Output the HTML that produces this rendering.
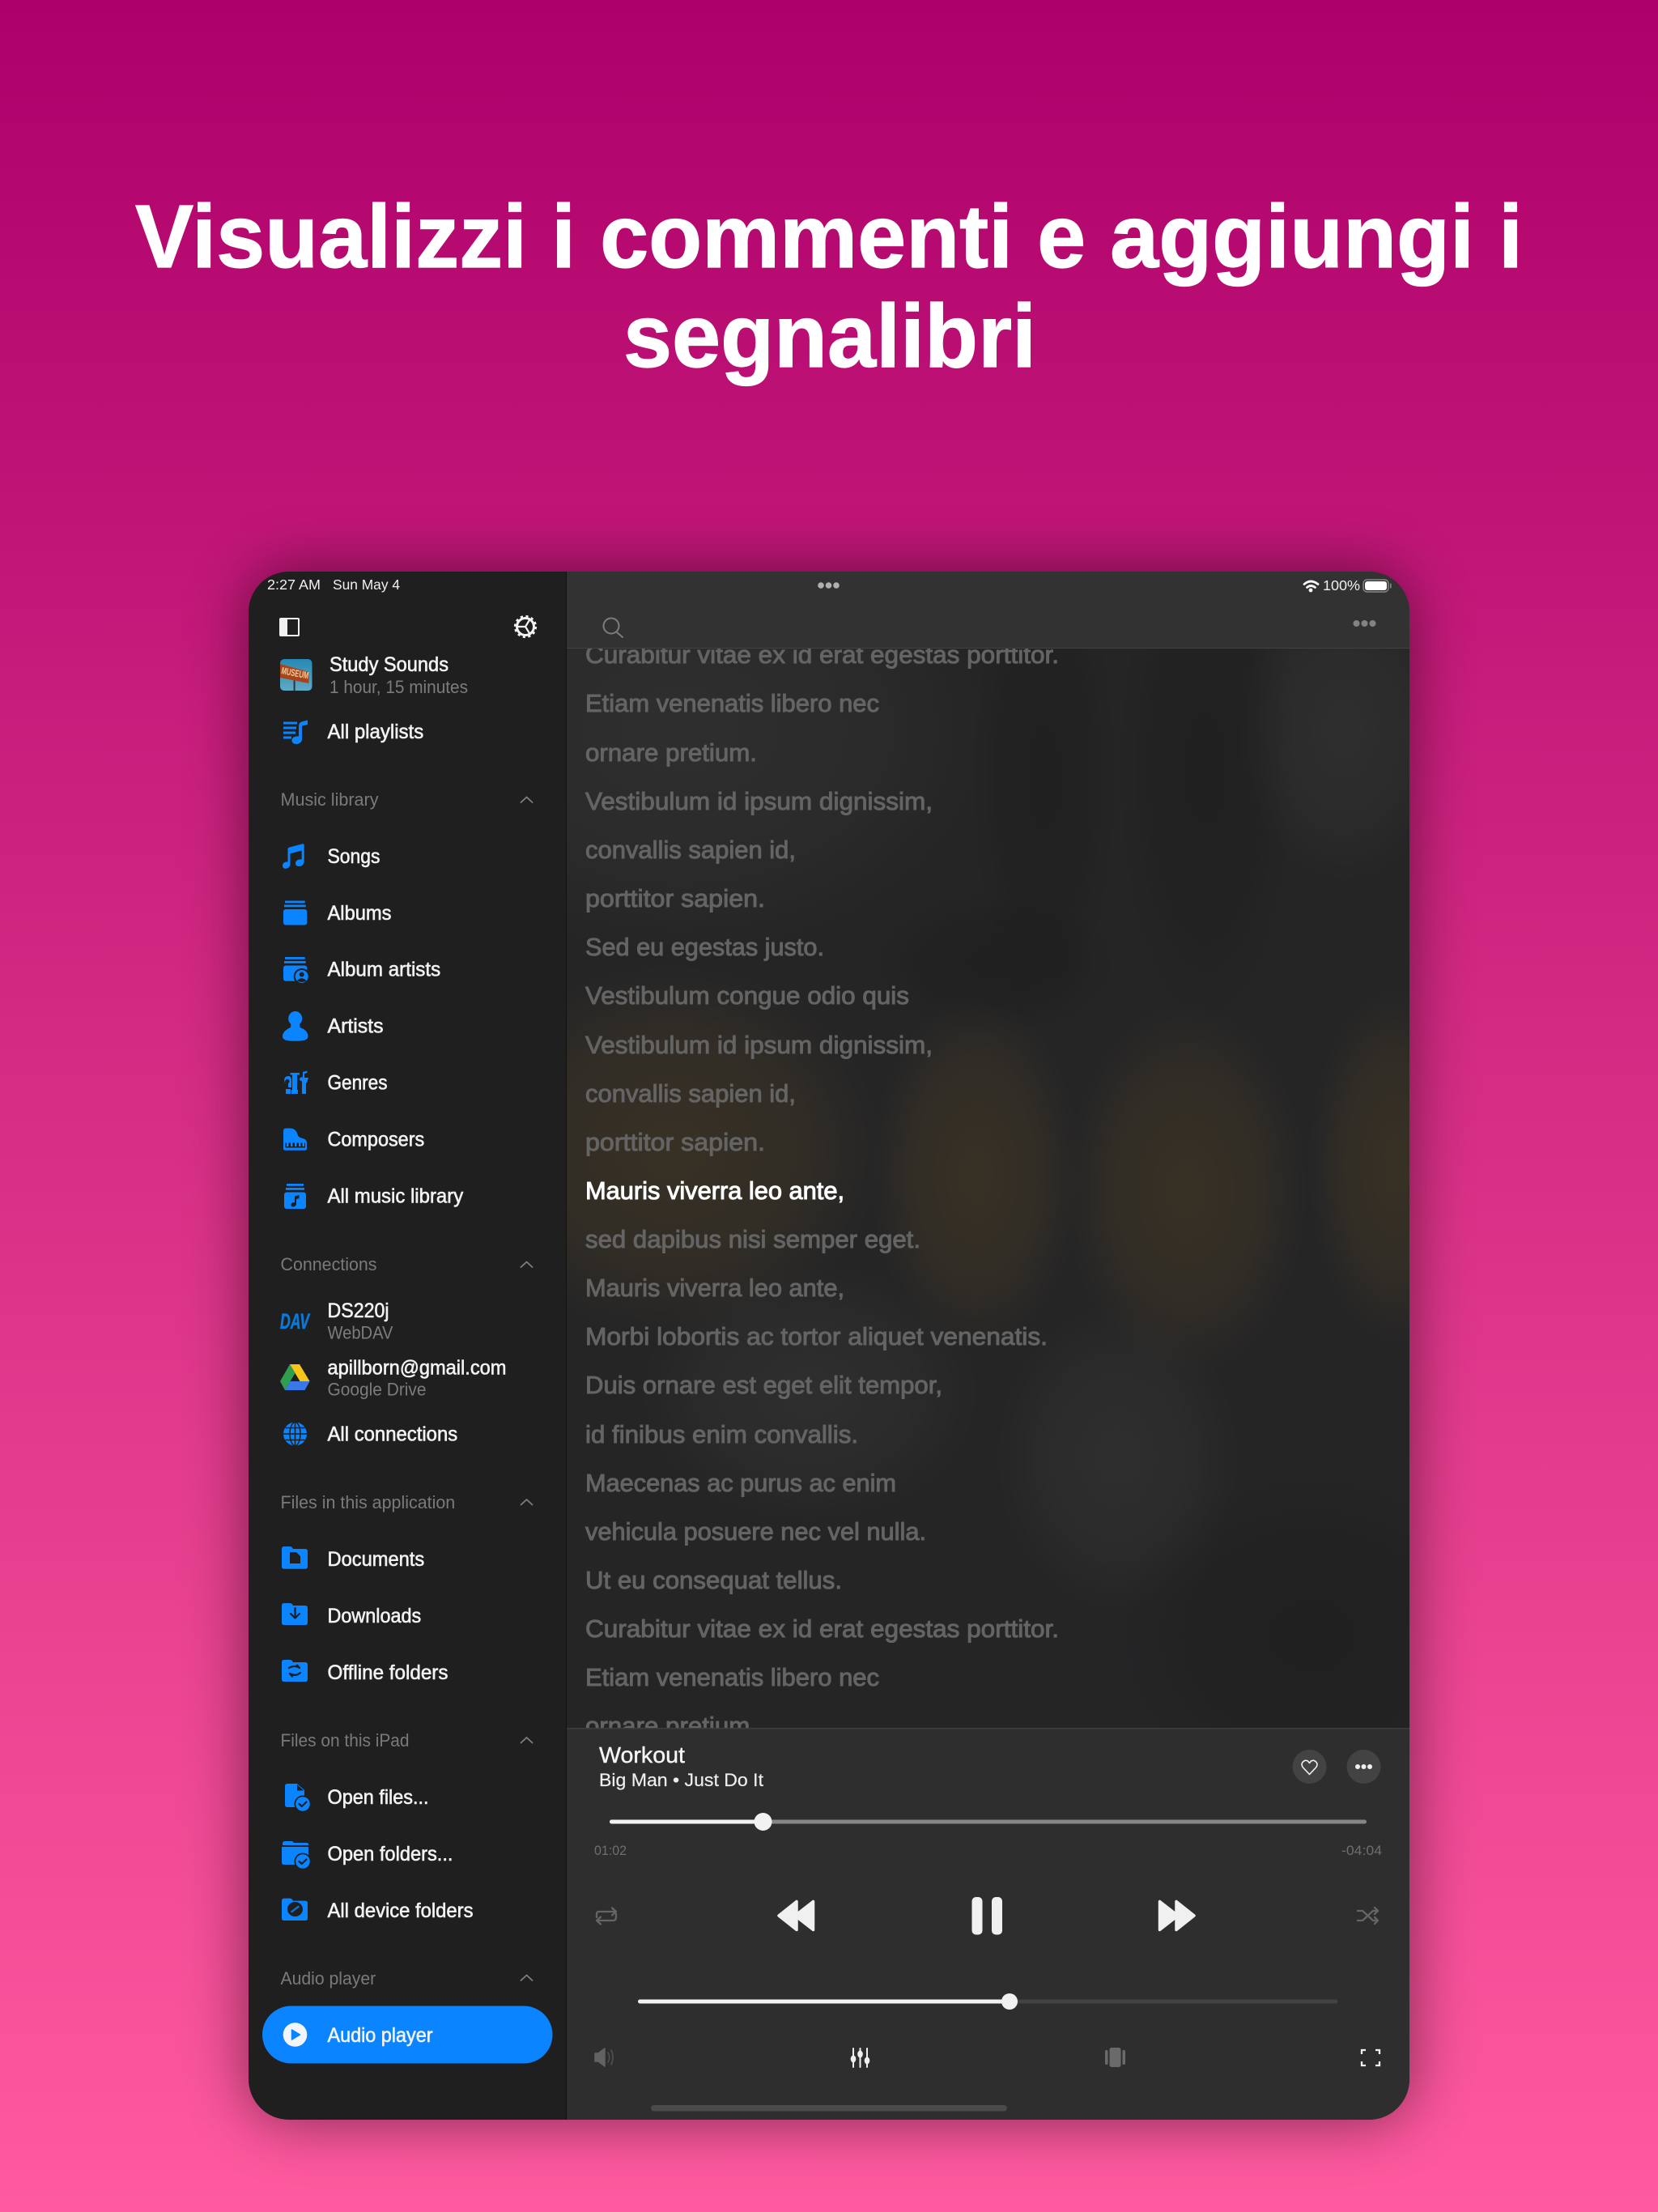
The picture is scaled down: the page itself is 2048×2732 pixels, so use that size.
<!DOCTYPE html>
<html><head><meta charset="utf-8"><title>Audio player</title>
<style>
html,body{margin:0;padding:0;background:#ad006b;}
svg{display:block;}
text{font-family:"Liberation Sans",sans-serif;}
.t{font-weight:700;font-size:110px;fill:#fff;stroke:#fff;stroke-width:1.2px;}
.l{font-size:31px;fill:#646464;stroke:#646464;stroke-width:1px;}
.n{font-size:25px;fill:#f2f2f2;stroke:#f2f2f2;stroke-width:.6px;}
.s{font-size:22px;fill:#7c7c7c;}
.h{font-size:22.5px;fill:#7a7a7a;}
.st{font-size:17.5px;fill:#f0f0f0;}
</style></head>
<body>
<svg xmlns="http://www.w3.org/2000/svg" width="2048" height="2732" viewBox="0 0 2048 2732">
<defs>
<linearGradient id="bg" x1="0" y1="0" x2="0" y2="1"><stop offset="0" stop-color="#ad006b"/><stop offset="1" stop-color="#ff5a9f"/></linearGradient>
<linearGradient id="art" x1="0" y1="0" x2="0" y2="1"><stop offset="0" stop-color="#2689b3"/><stop offset="1" stop-color="#5fa9c4"/></linearGradient>
<radialGradient id="ye"><stop offset="0" stop-color="#4a3c24" stop-opacity=".5"/><stop offset=".6" stop-color="#4a3c24" stop-opacity=".33"/><stop offset="1" stop-color="#4a3c24" stop-opacity="0"/></radialGradient>
<radialGradient id="da"><stop offset="0" stop-color="#1a1a1a" stop-opacity=".45"/><stop offset=".6" stop-color="#1a1a1a" stop-opacity=".28"/><stop offset="1" stop-color="#1a1a1a" stop-opacity="0"/></radialGradient>
<radialGradient id="li"><stop offset="0" stop-color="#3a3a3a" stop-opacity=".45"/><stop offset=".6" stop-color="#3a3a3a" stop-opacity=".28"/><stop offset="1" stop-color="#3a3a3a" stop-opacity="0"/></radialGradient>
<filter id="sh" x="-20%" y="-20%" width="140%" height="140%"><feGaussianBlur stdDeviation="38"/></filter>
<clipPath id="dev"><rect x="307" y="706" width="1434" height="1912" rx="50"/></clipPath>
<clipPath id="ly"><rect x="700" y="800" width="1041" height="1334"/></clipPath>
</defs>
<rect width="2048" height="2732" fill="url(#bg)"/>
<text class="t" x="167" y="330" textLength="1714" lengthAdjust="spacingAndGlyphs">Visualizzi i commenti e aggiungi i</text>
<text class="t" x="770" y="453" textLength="510" lengthAdjust="spacingAndGlyphs">segnalibri</text>
<rect x="307" y="706" width="1434" height="1912" rx="50" fill="#000" opacity=".5" filter="url(#sh)"/>

<g clip-path="url(#dev)">
<rect x="307" y="706" width="393" height="1912" fill="#1f1f1f"/>
<rect x="699" y="706" width="1" height="1912" fill="#111"/>
<rect x="700" y="706" width="1041" height="1912" fill="#252526"/>
<g clip-path="url(#ly)">
<ellipse cx="840" cy="900" rx="380" ry="280" fill="url(#li)"/>
<ellipse cx="1290" cy="960" rx="90" ry="300" fill="url(#da)"/>
<ellipse cx="1490" cy="950" rx="110" ry="320" fill="url(#da)"/>
<ellipse cx="1230" cy="1190" rx="150" ry="90" fill="url(#da)"/>
<ellipse cx="1660" cy="900" rx="130" ry="190" fill="url(#li)"/>
<ellipse cx="830" cy="1420" rx="260" ry="230" fill="url(#ye)"/>
<ellipse cx="1205" cy="1450" rx="130" ry="220" fill="url(#ye)"/>
<ellipse cx="1465" cy="1470" rx="150" ry="230" fill="url(#ye)"/>
<ellipse cx="1725" cy="1440" rx="110" ry="220" fill="url(#ye)"/>
<ellipse cx="1380" cy="1800" rx="150" ry="190" fill="url(#li)"/>
<ellipse cx="1000" cy="1720" rx="210" ry="160" fill="url(#li)"/>
<ellipse cx="1620" cy="2020" rx="240" ry="200" fill="url(#da)"/>
<text class="l" x="723" y="819" textLength="585" lengthAdjust="spacingAndGlyphs">Curabitur vitae ex id erat egestas porttitor.</text>
<text class="l" x="723" y="879" textLength="363" lengthAdjust="spacingAndGlyphs">Etiam venenatis libero nec</text>
<text class="l" x="723" y="940" textLength="212" lengthAdjust="spacingAndGlyphs">ornare pretium.</text>
<text class="l" x="723" y="1000" textLength="429" lengthAdjust="spacingAndGlyphs">Vestibulum id ipsum dignissim,</text>
<text class="l" x="723" y="1060" textLength="260" lengthAdjust="spacingAndGlyphs">convallis sapien id,</text>
<text class="l" x="723" y="1120" textLength="222" lengthAdjust="spacingAndGlyphs">porttitor sapien.</text>
<text class="l" x="723" y="1180" textLength="295" lengthAdjust="spacingAndGlyphs">Sed eu egestas justo.</text>
<text class="l" x="723" y="1240" textLength="400" lengthAdjust="spacingAndGlyphs">Vestibulum congue odio quis</text>
<text class="l" x="723" y="1301" textLength="429" lengthAdjust="spacingAndGlyphs">Vestibulum id ipsum dignissim,</text>
<text class="l" x="723" y="1361" textLength="260" lengthAdjust="spacingAndGlyphs">convallis sapien id,</text>
<text class="l" x="723" y="1421" textLength="222" lengthAdjust="spacingAndGlyphs">porttitor sapien.</text>
<text class="l" x="723" y="1481" textLength="320" lengthAdjust="spacingAndGlyphs" style="fill:#fff;stroke:#fff">Mauris viverra leo ante,</text>
<text class="l" x="723" y="1541" textLength="414" lengthAdjust="spacingAndGlyphs">sed dapibus nisi semper eget.</text>
<text class="l" x="723" y="1601" textLength="320" lengthAdjust="spacingAndGlyphs">Mauris viverra leo ante,</text>
<text class="l" x="723" y="1661" textLength="571" lengthAdjust="spacingAndGlyphs">Morbi lobortis ac tortor aliquet venenatis.</text>
<text class="l" x="723" y="1721" textLength="441" lengthAdjust="spacingAndGlyphs">Duis ornare est eget elit tempor,</text>
<text class="l" x="723" y="1782" textLength="337" lengthAdjust="spacingAndGlyphs">id finibus enim convallis.</text>
<text class="l" x="723" y="1842" textLength="384" lengthAdjust="spacingAndGlyphs">Maecenas ac purus ac enim</text>
<text class="l" x="723" y="1902" textLength="421" lengthAdjust="spacingAndGlyphs">vehicula posuere nec vel nulla.</text>
<text class="l" x="723" y="1962" textLength="317" lengthAdjust="spacingAndGlyphs">Ut eu consequat tellus.</text>
<text class="l" x="723" y="2022" textLength="585" lengthAdjust="spacingAndGlyphs">Curabitur vitae ex id erat egestas porttitor.</text>
<text class="l" x="723" y="2082" textLength="363" lengthAdjust="spacingAndGlyphs">Etiam venenatis libero nec</text>
<text class="l" x="723" y="2142" textLength="212" lengthAdjust="spacingAndGlyphs">ornare pretium.</text>
</g>
<!-- header -->
<rect x="700" y="706" width="1041" height="94" fill="#323232"/>
<rect x="700" y="800" width="1041" height="1" fill="#424242"/>
<!-- player -->
<rect x="700" y="2134" width="1041" height="484" fill="#2e2e2e"/>
<rect x="700" y="2134" width="1041" height="1.5" fill="#3e3e3e"/>
</g>

<!-- status bar -->
<text class="st" x="330" y="728" textLength="66" lengthAdjust="spacingAndGlyphs">2:27 AM</text>
<text class="st" x="411" y="728" textLength="83" lengthAdjust="spacingAndGlyphs">Sun May 4</text>
<g fill="#b0b0b0"><circle cx="1014" cy="723" r="3.800"/><circle cx="1023.500" cy="723" r="3.800"/><circle cx="1033" cy="723" r="3.800"/></g>
<g fill="none" stroke="#f5f5f5" stroke-width="2.800" stroke-linecap="round"><path d="M1611 721.500Q1619 714.500 1628 721.500"/><path d="M1614.500 725.500Q1619 721.500 1624.500 725.500"/></g>
<circle cx="1619" cy="729" r="2.400" fill="#f5f5f5"/>
<text class="st" x="1634" y="729" textLength="46" lengthAdjust="spacingAndGlyphs">100%</text>
<rect x="1684" y="716" width="31" height="15" rx="4.500" fill="none" stroke="#8a8a8a" stroke-width="1.400"/>
<rect x="1686" y="718" width="27" height="11" rx="3" fill="#fff"/>
<rect x="1717" y="720.500" width="1.600" height="6" rx=".8" fill="#8a8a8a"/>

<!-- header icons -->
<rect x="345" y="763" width="25" height="23" rx="2" fill="#f0f0f0"/>
<rect x="355" y="765" width="13" height="19" fill="#1f1f1f"/>
<g fill="none" stroke="#f2f2f2">
<circle cx="649" cy="774" r="10.500" stroke-width="3"/>
<circle cx="649" cy="774" r="12.600" stroke-width="3" stroke-dasharray="3.100 3.500"/>
<path d="M639 774H649L654.500 765M649 774L654.500 783" stroke-width="2.200"/>
</g>
<g fill="none" stroke="#7d7d7d" stroke-width="2"><circle cx="755" cy="773" r="9.500"/><path d="M761.500 780.500L769 787" stroke-linecap="round"/></g>
<g fill="#828282"><circle cx="1675.500" cy="770" r="4"/><circle cx="1685.500" cy="770" r="4"/><circle cx="1695.500" cy="770" r="4"/></g>

<!-- playlist header -->
<rect x="346" y="814" width="39.500" height="39" rx="5" fill="url(#art)"/>
<rect x="362.600" y="836" width="2" height="17" fill="#3a3030"/>
<polygon points="346,820 381.500,830 381.500,844 346,837" fill="#a8441c"/>
<text x="347" y="832" transform="rotate(11 347 832)" textLength="34" lengthAdjust="spacingAndGlyphs" style="font-size:12px;font-weight:700;fill:#f4cf9c">MUSEUM</text>
<text class="n" x="407" y="829" textLength="147" lengthAdjust="spacingAndGlyphs">Study Sounds</text>
<text class="s" x="407" y="856" textLength="171" lengthAdjust="spacingAndGlyphs">1 hour, 15 minutes</text>

<!-- sidebar icons -->
<g fill="#0a84ff">
<path d="M350 891.500H367V894.500H350ZM350 897.500H366V900.500H350ZM350 903.500H365V906.500H350ZM350 909.500H360V912.500H350Z"/>
<path d="M369 897Q369 892 374 891L380 889.500V895L373 896.500V913C373 916.500 369.500 919 366 919C362.500 919 360.500 917 360.500 914.500C360.500 911 364 909 369 909.500Z"/>
<path d="M355.500 1049Q355.500 1047 357.500 1046.500L373.500 1042.300Q375.700 1041.800 375.700 1044V1064C375.700 1067.500 372.800 1070 369.500 1070C366.800 1070 365 1068.500 365 1066.200C365 1063 368.500 1060.800 372.700 1061.500V1050.500L358.500 1054.200V1067.500C358.500 1070.500 355.800 1072.800 352.800 1072.800C350.500 1072.800 349 1071.300 349 1069.200C349 1066 352 1063.900 355.500 1064.500Z"/>
<rect x="352" y="1112.500" width="24.700" height="2.800"/><rect x="351" y="1117.500" width="26.700" height="2.800"/><rect x="350" y="1123" width="29.300" height="19.500" rx="3"/>
<rect x="352" y="1182" width="24.700" height="2.800"/><rect x="351" y="1187" width="26.700" height="2.800"/><rect x="350" y="1192.500" width="29.300" height="19.300" rx="3"/>
<circle cx="372.700" cy="1206" r="10" fill="#1f1f1f"/><circle cx="372.700" cy="1206" r="8" />
<circle cx="372.700" cy="1203.500" r="3" fill="#1f1f1f"/><path d="M366.700 1211.500Q372.700 1205 378.700 1211.500Q372.700 1214.500 366.700 1211.500Z" fill="#1f1f1f"/>
<ellipse cx="364.700" cy="1258" rx="8.500" ry="9"/><path d="M359.500 1263H370L370.500 1269Q380.500 1272.500 380.500 1280C380.500 1284.500 375 1285.800 364.700 1285.800C354.500 1285.800 349 1284.500 349 1280C349 1272.500 359 1269 359 1269Z"/>
<!-- genres -->
<path d="M356 1329C350 1329 350 1337 354 1339L352 1337C352 1334 354 1332 356 1333C358 1334 358 1337 356 1338V1343H360V1335C360 1331 359 1329 356 1329Z"/>
<path d="M353 1345H359V1351H353Z"/>
<path d="M358.500 1325H370V1327.500H367V1346H368V1351H360V1346H361V1327.500H358.500Z"/>
<path d="M372 1331H381L379 1337H378V1351H373V1337Z"/>
<path d="M379.500 1322.500V1325L376 1326V1332C376 1334 374 1335 372.500 1335C371 1335 370 1334 370 1333C370 1331 372 1330 374 1330.500V1324Z"/>
<!-- piano -->
<path d="M350 1397Q350 1393.500 353.500 1393.500H358Q365.500 1393.500 367.500 1401Q368.500 1405 374 1406Q379 1407 379 1412V1418.500Q379 1420.700 376.800 1420.700H352.200Q350 1420.700 350 1418.500Z"/>
<path d="M352.500 1411.500H377V1417.500H352.500Z" fill="#1f1f1f"/><path d="M354 1411.500H356.500V1416H354ZM359 1411.500H361.500V1416H359ZM364 1411.500H366.500V1416H364ZM369 1411.500H371.500V1416H369ZM373.500 1411.500H376V1416H373.500Z"/>
<!-- all music -->
<rect x="354" y="1462" width="21" height="2.800"/><rect x="353" y="1467" width="23" height="2.800"/><rect x="351" y="1472.500" width="27" height="20.500" rx="3"/>
<path d="M364 1477.500L369.500 1476V1480L366 1481V1487C366 1489 364 1490.500 362 1490.500C360.500 1490.500 359.500 1489.500 359.500 1488.200C359.500 1486.200 361.500 1484.700 364 1485Z" fill="#1f1f1f"/>
<!-- globe -->
<circle cx="364.500" cy="1771" r="14.500"/>
<g fill="none" stroke="#1f1f1f" stroke-width="1.500"><ellipse cx="364.500" cy="1771" rx="6.500" ry="14.500"/><path d="M364.500 1756.500V1785.500M350 1771H379M352.500 1763.500H376.500M352.500 1778.500H376.500"/></g>
<!-- folders -->
<path d="M348 1913Q348 1910 351 1910H358Q360 1910 361 1911.500L362 1913H377Q380 1913 380 1916V1935Q380 1937.700 377 1937.700H351Q348 1937.700 348 1935Z"/>
<path d="M348 1983Q348 1980 351 1980H358Q360 1980 361 1981.500L362 1983H377Q380 1983 380 1986V2004Q380 2007 377 2007H351Q348 2007 348 2004Z"/>
<path d="M348 2053Q348 2050 351 2050H358Q360 2050 361 2051.500L362 2053H377Q380 2053 380 2056V2074Q380 2077 377 2077H351Q348 2077 348 2074Z"/>
<path d="M348 2347.600Q348 2344.600 351 2344.600H358Q360 2344.600 361 2346.100L362 2347.600H377Q380 2347.600 380 2350.600V2369Q380 2372 377 2372H351Q348 2372 348 2369Z"/>
</g>
<path d="M358 1917H366L371 1922V1931H358Z" fill="#1f1f1f"/>
<g fill="none" stroke="#1f1f1f" stroke-width="2.200" stroke-linecap="round" stroke-linejoin="round">
<path d="M364.500 1986V1998M359 1993L364.500 1998.500L370 1993"/>
<path d="M357 2060Q364 2056 370 2060M370 2060L367 2056.500M371 2066Q365 2071 358 2067M358 2067L361 2070.500"/>
</g>
<ellipse cx="364.500" cy="2358" rx="9.500" ry="9" fill="#1f1f1f"/>
<path d="M360.500 2361L368.500 2355" stroke="#0a84ff" stroke-width="2.500" stroke-linecap="round" fill="none" opacity=".8"/>
<!-- drive -->
<polygon points="358,1685 370,1685 382.500,1706 370.500,1706" fill="#f5c518"/>
<polygon points="358,1685 364.500,1696 352,1717 346,1706" fill="#2f9e4f"/>
<polygon points="352,1717 358.500,1706 382.500,1706 376.500,1717" fill="#3b78e7"/>
<text x="346" y="1641" textLength="36" lengthAdjust="spacingAndGlyphs" style="font-size:27px;font-weight:700;font-style:italic;fill:#0b79d8;stroke:#0b79d8;stroke-width:.6px">DAV</text>
<!-- open files -->
<g fill="#0a84ff">
<path d="M352 2206Q352 2203 355 2203H367L376 2211V2232H355Q352 2232 352 2229Z"/>
<path d="M349 2277Q349 2274 352 2274H360Q362 2274 363 2276H379Q381 2276 381.500 2279H349Z"/>
<path d="M348 2281H381V2300Q381 2303 378 2303H351Q348 2303 348 2300Z"/>
</g>
<path d="M367 2204V2211.500H375Z" fill="#1f1f1f"/>
<circle cx="374" cy="2228" r="10.500" fill="#1f1f1f"/><circle cx="374" cy="2228" r="8.800" fill="#0a84ff"/>
<path d="M369.500 2228L372.800 2231L378.500 2225.500" fill="none" stroke="#1f1f1f" stroke-width="2.200" stroke-linecap="round" stroke-linejoin="round"/>
<circle cx="374" cy="2299" r="10.500" fill="#1f1f1f"/><circle cx="374" cy="2299" r="8.800" fill="#0a84ff"/>
<path d="M369.500 2299L372.800 2302L378.500 2296.500" fill="none" stroke="#1f1f1f" stroke-width="2.200" stroke-linecap="round" stroke-linejoin="round"/>
<!-- play pill -->
<rect x="324" y="2477.500" width="358.500" height="71" rx="35.500" fill="#0a84ff"/>
<circle cx="364.500" cy="2513" r="14.800" fill="#f2f6fb"/>
<path d="M360.500 2507V2519L370.500 2513Z" fill="#0a84ff" stroke="#0a84ff" stroke-width="1.500" stroke-linejoin="round"/>

<!-- sidebar labels -->
<text class="n" x="404.500" y="912" textLength="118.700" lengthAdjust="spacingAndGlyphs">All playlists</text>
<text class="h" x="346.500" y="995" textLength="121" lengthAdjust="spacingAndGlyphs">Music library</text>
<text class="n" x="404.500" y="1066" textLength="65" lengthAdjust="spacingAndGlyphs">Songs</text>
<text class="n" x="404.500" y="1136" textLength="79" lengthAdjust="spacingAndGlyphs">Albums</text>
<text class="n" x="404.500" y="1205.500" textLength="139.700" lengthAdjust="spacingAndGlyphs">Album artists</text>
<text class="n" x="404.500" y="1275.500" textLength="69" lengthAdjust="spacingAndGlyphs">Artists</text>
<text class="n" x="404.500" y="1345.500" textLength="74" lengthAdjust="spacingAndGlyphs">Genres</text>
<text class="n" x="404.500" y="1415.500" textLength="119.700" lengthAdjust="spacingAndGlyphs">Composers</text>
<text class="n" x="404.500" y="1485.500" textLength="167.700" lengthAdjust="spacingAndGlyphs">All music library</text>
<text class="h" x="346.500" y="1569" textLength="119" lengthAdjust="spacingAndGlyphs">Connections</text>
<text class="n" x="404.500" y="1627" textLength="76" lengthAdjust="spacingAndGlyphs">DS220j</text>
<text class="s" x="404.500" y="1653.500" textLength="81" lengthAdjust="spacingAndGlyphs">WebDAV</text>
<text class="n" x="404.500" y="1697.500" textLength="221" lengthAdjust="spacingAndGlyphs">apillborn@gmail.com</text>
<text class="s" x="404.500" y="1723.500" textLength="122" lengthAdjust="spacingAndGlyphs">Google Drive</text>
<text class="n" x="404.500" y="1779.500" textLength="160.700" lengthAdjust="spacingAndGlyphs">All connections</text>
<text class="h" x="346.500" y="1863" textLength="215.700" lengthAdjust="spacingAndGlyphs">Files in this application</text>
<text class="n" x="404.500" y="1934" textLength="119.700" lengthAdjust="spacingAndGlyphs">Documents</text>
<text class="n" x="404.500" y="2004" textLength="115.700" lengthAdjust="spacingAndGlyphs">Downloads</text>
<text class="n" x="404.500" y="2074" textLength="149" lengthAdjust="spacingAndGlyphs">Offline folders</text>
<text class="h" x="346.500" y="2157" textLength="159" lengthAdjust="spacingAndGlyphs">Files on this iPad</text>
<text class="n" x="404.500" y="2228" textLength="125" lengthAdjust="spacingAndGlyphs">Open files...</text>
<text class="n" x="404.500" y="2298" textLength="155" lengthAdjust="spacingAndGlyphs">Open folders...</text>
<text class="n" x="404.500" y="2368" textLength="180" lengthAdjust="spacingAndGlyphs">All device folders</text>
<text class="h" x="346.500" y="2451" textLength="117.700" lengthAdjust="spacingAndGlyphs">Audio player</text>
<text class="n" x="404.500" y="2522" textLength="130" lengthAdjust="spacingAndGlyphs">Audio player</text>
<g fill="none" stroke="#7f7f7f" stroke-width="1.800" stroke-linecap="round" stroke-linejoin="round">
<path d="M643.500 991L650.500 984.500L657.500 991"/><path d="M643.500 1565L650.500 1558.500L657.500 1565"/><path d="M643.500 1858.500L650.500 1852L657.500 1858.500"/><path d="M643.500 2152.500L650.500 2146L657.500 2152.500"/><path d="M643.500 2446L650.500 2439.500L657.500 2446"/>
</g>

<!-- player -->
<text x="740" y="2177" textLength="106" lengthAdjust="spacingAndGlyphs" style="font-size:28px;fill:#f5f5f5;stroke:#f5f5f5;stroke-width:.4px">Workout</text>
<text x="740" y="2206" textLength="203" lengthAdjust="spacingAndGlyphs" style="font-size:22.500px;fill:#eee;stroke:#eee;stroke-width:.2px">Big Man • Just Do It</text>
<circle cx="1617.500" cy="2182" r="21" fill="#434343"/><circle cx="1684.500" cy="2182" r="21" fill="#434343"/>
<path d="M1617.500 2191.500L1609.500 2183Q1606.800 2179.500 1609 2176.500Q1612 2173 1615.500 2175L1617.500 2177.500L1619.500 2175Q1623 2173 1626 2176.500Q1628.200 2179.500 1625.500 2183Z" fill="none" stroke="#f0f0f0" stroke-width="1.600" stroke-linejoin="round"/>
<g fill="#f0f0f0"><circle cx="1677" cy="2182" r="3"/><circle cx="1684.500" cy="2182" r="3"/><circle cx="1692" cy="2182" r="3"/></g>
<rect x="753" y="2247.500" width="935" height="5" rx="2.500" fill="#868686"/>
<rect x="753" y="2247.500" width="190" height="5" rx="2.500" fill="#f2f2f2"/>
<circle cx="942.500" cy="2250" r="11" fill="#f2f2f2"/>
<text x="734" y="2291" textLength="40" lengthAdjust="spacingAndGlyphs" style="font-size:17px;fill:#6e6e6e">01:02</text>
<text x="1657" y="2291" textLength="50" lengthAdjust="spacingAndGlyphs" style="font-size:17px;fill:#6e6e6e">-04:04</text>
<!-- transport -->
<g fill="#f0f0f0" stroke="#f0f0f0" stroke-width="3.500" stroke-linejoin="round">
<path d="M962 2366L984 2348.500V2383.500Z"/><path d="M982 2366L1004.500 2348.500V2383.500Z"/>
<path d="M1475 2366L1453 2348.500V2383.500Z"/><path d="M1455 2366L1432.500 2348.500V2383.500Z"/>
</g>
<rect x="1200.500" y="2343" width="13" height="46.500" rx="5" fill="#f0f0f0"/><rect x="1225" y="2343" width="13" height="46.500" rx="5" fill="#f0f0f0"/>
<g fill="none" stroke="#656565" stroke-width="2.300" stroke-linecap="round" stroke-linejoin="round">
<path d="M737 2368V2364Q737 2361 740 2361H761M756 2356.500L761 2361L756 2365.500"/>
<path d="M761 2364V2368Q761 2372 757 2372H737M742 2367.500L737 2372L742 2376.500"/>
<path d="M1677 2360H1683L1696 2372H1702M1698 2356L1702 2360L1698 2364M1677 2372H1683L1696 2360H1702M1698 2368L1702 2372L1698 2376"/>
</g>
<rect x="788" y="2469.500" width="864.500" height="5" rx="2.500" fill="#434343"/>
<rect x="788" y="2469.500" width="460" height="5" rx="2.500" fill="#f2f2f2"/>
<circle cx="1247" cy="2472" r="10" fill="#f2f2f2"/>
<!-- bottom row -->
<path d="M735 2536H739L747 2530V2552L739 2546H735Z" fill="#626262" stroke="#626262" stroke-width="1.500" stroke-linejoin="round"/>
<path d="M751 2535Q754.500 2541 751 2547M755 2532Q759 2541 755 2550" fill="none" stroke="#505050" stroke-width="1.600" stroke-linecap="round"/>
<g stroke="#efefef" stroke-width="2" stroke-linecap="round"><path d="M1054 2530V2553M1062.500 2530V2553M1071 2530V2553"/></g>
<g fill="#efefef"><ellipse cx="1054" cy="2543" rx="3.300" ry="4.500"/><ellipse cx="1062.500" cy="2537" rx="3.300" ry="4.500"/><ellipse cx="1071" cy="2545" rx="3.300" ry="4.500"/></g>
<rect x="1370.500" y="2529" width="14" height="24" rx="2.500" fill="#6a6a6a"/>
<rect x="1365" y="2532" width="3.500" height="18" rx="1.500" fill="#6a6a6a"/><rect x="1386.500" y="2532" width="3.500" height="18" rx="1.500" fill="#6a6a6a"/>
<path d="M1682 2537V2532H1687M1699 2532H1704V2537M1682 2546V2551H1687M1699 2551H1704V2546" fill="none" stroke="#f0f0f0" stroke-width="2.300"/>
<rect x="804" y="2600" width="440" height="7.500" rx="3.700" fill="#4b4b4b"/>
</svg>
</body></html>
